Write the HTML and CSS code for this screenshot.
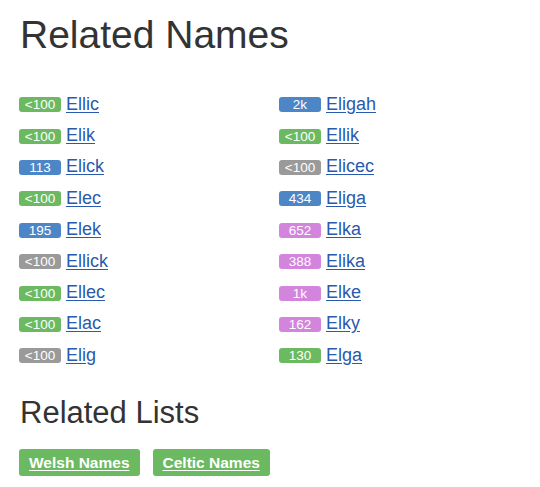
FILE: index.html
```html
<!DOCTYPE html>
<html>
<head>
<meta charset="utf-8">
<link rel="stylesheet" href="styles.css">
</head>
<body>
<div class="page">
  <h1 class="title">Related Names</h1>
  <div class="cols">
    <ul class="names">
      <li><span class="badge green">&lt;100</span><a href="#">Ellic</a></li>
      <li><span class="badge green">&lt;100</span><a href="#">Elik</a></li>
      <li><span class="badge blue">113</span><a href="#">Elick</a></li>
      <li><span class="badge green">&lt;100</span><a href="#">Elec</a></li>
      <li><span class="badge blue">195</span><a href="#">Elek</a></li>
      <li><span class="badge gray">&lt;100</span><a href="#">Ellick</a></li>
      <li><span class="badge green">&lt;100</span><a href="#">Ellec</a></li>
      <li><span class="badge green">&lt;100</span><a href="#">Elac</a></li>
      <li><span class="badge gray">&lt;100</span><a href="#">Elig</a></li>
    </ul>
    <ul class="names">
      <li><span class="badge blue">2k</span><a href="#">Eligah</a></li>
      <li><span class="badge green">&lt;100</span><a href="#">Ellik</a></li>
      <li><span class="badge gray">&lt;100</span><a href="#">Elicec</a></li>
      <li><span class="badge blue">434</span><a href="#">Eliga</a></li>
      <li><span class="badge pink">652</span><a href="#">Elka</a></li>
      <li><span class="badge pink">388</span><a href="#">Elika</a></li>
      <li><span class="badge pink">1k</span><a href="#">Elke</a></li>
      <li><span class="badge pink">162</span><a href="#">Elky</a></li>
      <li><span class="badge green">130</span><a href="#">Elga</a></li>
    </ul>
  </div>
  <h2 class="subtitle">Related Lists</h2>
  <div class="lists">
    <a class="btn" href="#">Welsh Names</a>
    <a class="btn" href="#">Celtic Names</a>
  </div>
</div>
</body>
</html>
```

FILE: styles.css
```css
html, body {
  margin: 0;
  padding: 0;
  background: #ffffff;
}
body {
  font-family: "Liberation Sans", Arial, Helvetica, sans-serif;
  color: #333333;
}
.page {
  padding: 13px 19px 0 19px;
}
.title {
  margin: 0;
  font-size: 39px;
  line-height: 44px;
  font-weight: normal;
  color: #333333;
  padding-left: 1px;
}
.cols {
  display: flex;
  margin-top: 31.5px;
}
.names {
  list-style: none;
  margin: 0;
  padding: 0;
  width: 260px;
  flex: none;
}
.names li {
  height: 31.4px;
  display: flex;
  align-items: center;
  gap: 5px;
}
.names a {
  font-size: 18px;
  line-height: 31px;
  color: #2a5aad;
  text-decoration: underline;
  text-underline-offset: 2px;
}
.badge {
  display: inline-block;
  width: 42px;
  height: 15px;
  line-height: 15px;
  border-radius: 3px;
  text-align: center;
  color: #ffffff;
  font-size: 13.5px;
  margin-top: 1px;
}
.green { background: #6bb960; }
.blue { background: #4c86c6; }
.gray { background: #9a9a9a; }
.pink { background: #d384dc; }
.subtitle {
  margin: 24px 0 0 0;
  font-size: 31px;
  line-height: 36px;
  font-weight: normal;
  color: #333333;
  padding-left: 1px;
}
.lists {
  display: flex;
  gap: 13px;
  margin-top: 18px;
}
.btn {
  display: inline-block;
  height: 27px;
  line-height: 27px;
  padding: 0 10px;
  border-radius: 3px;
  background: #6bb960;
  color: #ffffff;
  font-weight: bold;
  font-size: 15.5px;
  text-decoration: underline;
  text-underline-offset: 2px;
}
```
